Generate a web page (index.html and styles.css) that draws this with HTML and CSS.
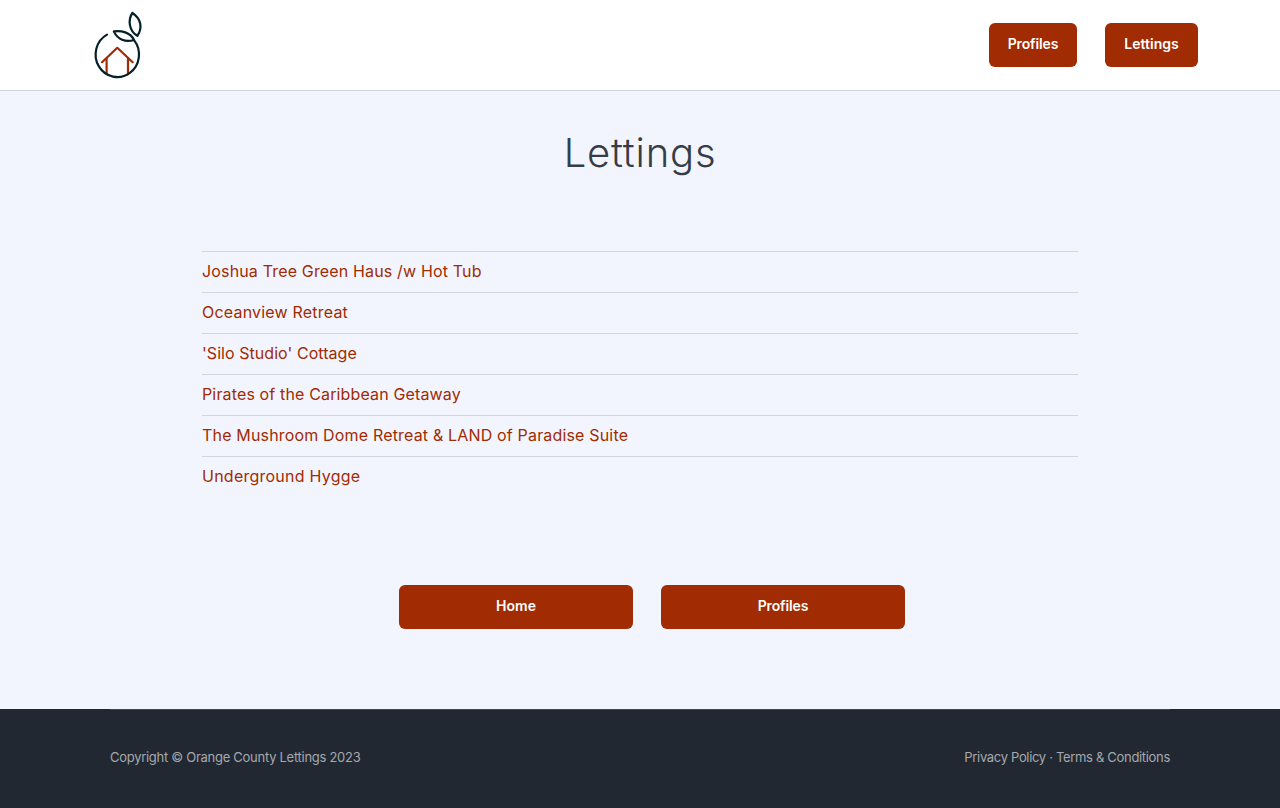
FILE: index.html
```html
<!DOCTYPE html>
<html lang="en">
<head>
<meta charset="utf-8">
<title>Lettings</title>
<link rel="stylesheet" href="styles.css">
</head>
<body>
<nav class="navbar">
  <a class="brand" href="#" aria-label="Home">
    <svg class="logo" viewBox="90 8 56 74" fill="none" stroke-width="2.2" stroke-linecap="round" stroke-linejoin="round">
      <g class="house"><path d="M102 62.2 117.3 47.8 132.7 62.2"/><path d="M106.6 58.5V73M128 58.5V73"/></g>
      <g class="fruit"><path d="M107 34.6A21.7 22.6 0 1 0 134.2 40.3"/><path d="M113.8 31.4C121 30.2 130.5 32.3 134 40C125.5 42.6 117.6 39.5 113.8 31.4Z"/><path d="M132.4 13C141.5 19 142.5 28 137.4 35.8C129.2 31.5 127.5 20 132.4 13Z"/></g>
    </svg>
  </a>
  <div class="nav-links"><a class="btn nav-profiles" href="#"><span class="t-profiles">Profiles</span></a><a class="btn nav-lettings" href="#"><span class="t-lettings">Lettings</span></a></div>
</nav>
<main class="content">
  <h1 class="title"><span>Lettings</span></h1>
  <ul class="list">
    <li><a class="l1" href="#">Joshua Tree Green Haus /w Hot Tub</a></li>
    <li><a class="l2" href="#">Oceanview Retreat</a></li>
    <li><a class="l3" href="#">'Silo Studio' Cottage</a></li>
    <li><a class="l4" href="#">Pirates of the Caribbean Getaway</a></li>
    <li><a class="l5" href="#">The Mushroom Dome Retreat &amp; LAND of Paradise Suite</a></li>
    <li><a class="l6" href="#">Underground Hygge</a></li>
  </ul>
  <div class="actions"><a class="btn home" href="#"><span class="t-home">Home</span></a><a class="btn profiles" href="#"><span class="t-profiles">Profiles</span></a></div>
</main>
<footer class="footer">
  <div class="footer-inner"><span class="copy">Copyright © Orange County Lettings 2023</span><span class="legal">Privacy Policy · Terms &amp; Conditions</span></div>
</footer>
</body>
</html>
```
FILE: styles.css
```css
* { box-sizing: border-box; }
body {
  margin: 0;
  height: 808px;
  overflow: hidden;
  display: flex;
  flex-direction: column;
  background: #f2f5fd;
  color: #363d47;
  font-family: Inter, "Open Sans", sans-serif;
  font-size: 16px;
}
a { color: #a12b02; text-decoration: none; }
.navbar {
  height: 91px;
  flex: none;
  display: flex;
  justify-content: space-between;
  background: #fff;
  border-bottom: 1px solid #cfd3de;
  padding: 8px 82px 0 90px;
}
.logo { display: block; width: 56px; height: 74px; }
.house { stroke: #a12b02; }
.fruit { stroke: #04202b; }
.nav-links { display: flex; gap: 28px; padding-top: 15px; }
.btn {
  display: flex;
  align-items: center;
  justify-content: center;
  height: 44px;
  padding-bottom: 3px;
  border-radius: 6px;
  background: #a12b02;
  color: #fff;
  font-size: 14px;
  font-weight: 600;
  white-space: nowrap;
}
.t-profiles { letter-spacing: -0.12px; }
.nav-profiles { width: 88px; }
.nav-lettings { width: 93px; }
.content { flex: 1; display: flex; flex-direction: column; align-items: center; }
.title { margin: 38px 0 0; font-size: 40px; line-height: 48px; font-weight: 300; letter-spacing: 0.8px; }
.list { width: 876px; margin: 74px 0 0; padding: 0; list-style: none; }
.list li { height: 41px; border-top: 1px solid #d2d5da; line-height: 38px; white-space: nowrap; }
.l1 { letter-spacing: 0.156px; }
.l2 { letter-spacing: 0.2px; }
.l3 { letter-spacing: 0.05px; }
.l4 { letter-spacing: 0.145px; }
.l5 { letter-spacing: 0.17px; }
.l6 { letter-spacing: 0.24px; }
.actions { display: flex; gap: 28px; margin: 88px 0 0 24px; }
.home { width: 234px; }
.profiles { width: 244px; }
.footer { height: 99px; flex: none; background: #212832; padding: 0 110px; }
.footer-inner {
  display: flex;
  justify-content: space-between;
  border-top: 1px solid #414750;
  padding-top: 37px;
  color: #a6a9ad;
  font-size: 13px;
  line-height: 20px;
  white-space: nowrap;
}
.copy { letter-spacing: -0.28px; }
.legal { letter-spacing: -0.32px; }
```
